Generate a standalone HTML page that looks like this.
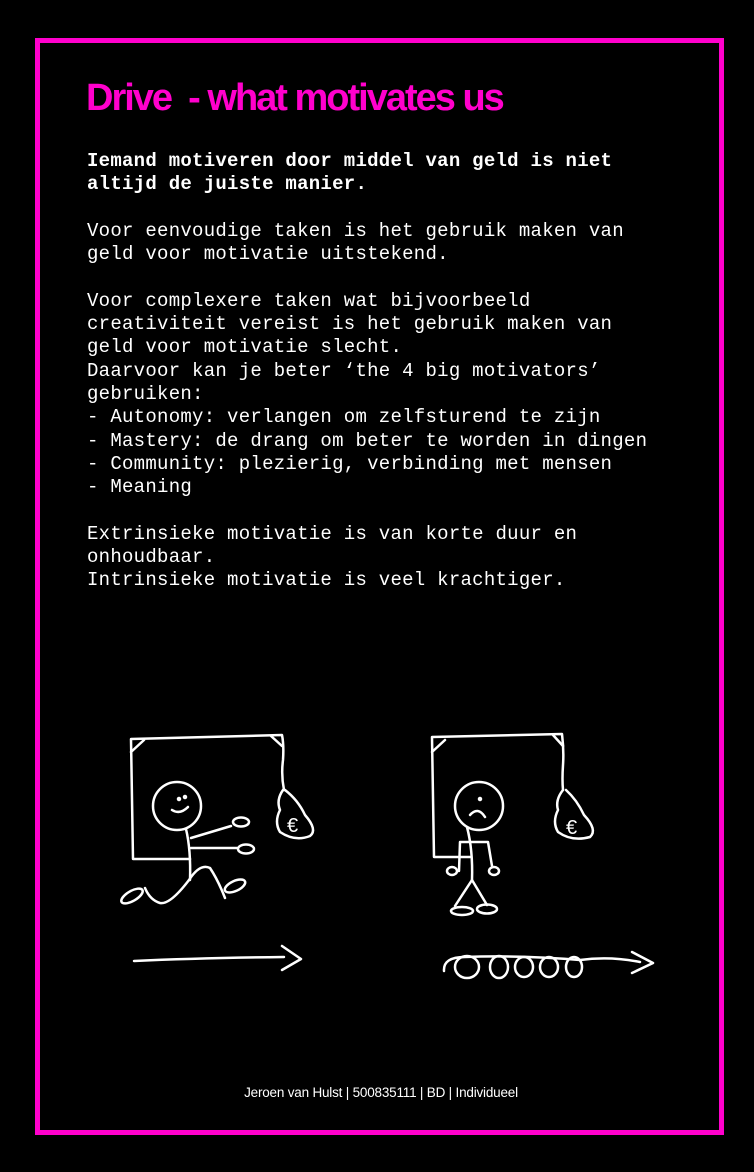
<!DOCTYPE html>
<html><head><meta charset="utf-8"><style>
html,body{margin:0;padding:0;background:#000;}
body{width:754px;height:1172px;position:relative;overflow:hidden;}
.frame{position:absolute;left:35px;top:38px;width:679px;height:1087px;border:5px solid #ff00cc;}
h1{position:absolute;left:86px;top:75px;margin:0;font:bold 38px/46px "Liberation Sans",sans-serif;letter-spacing:-2px;color:#ff00cc;white-space:pre;}
pre{position:absolute;left:87px;top:150px;margin:0;font:19px/23.3px "Liberation Mono",monospace;letter-spacing:0.27px;color:#fff;}
pre b{font-weight:bold;}
.foot{position:absolute;left:0;width:762px;top:1085px;text-align:center;font:13.5px/16px "Liberation Sans",sans-serif;letter-spacing:-0.2px;color:#fff;}
svg{position:absolute;left:0;top:0;}
</style></head><body>
<div class="frame"></div>
<h1>Drive  - what motivates us</h1>
<pre><b>Iemand motiveren door middel van geld is niet
altijd de juiste manier.</b>

Voor eenvoudige taken is het gebruik maken van
geld voor motivatie uitstekend.

Voor complexere taken wat bijvoorbeeld
creativiteit vereist is het gebruik maken van
geld voor motivatie slecht.
Daarvoor kan je beter ‘the 4 big motivators’
gebruiken:
- Autonomy: verlangen om zelfsturend te zijn
- Mastery: de drang om beter te worden in dingen
- Community: plezierig, verbinding met mensen
- Meaning

Extrinsieke motivatie is van korte duur en
onhoudbaar.
Intrinsieke motivatie is veel krachtiger.</pre>
<svg width="754" height="1172" fill="none" stroke="#fff" stroke-width="2.5" stroke-linecap="round" stroke-linejoin="round">
<path d="M190 859 L133 859 L131 739 L282 735 Q284 745 283 760 Q281 775 284 790"/>
<path d="M131 752 L144 740 M271 736 L282 746"/>
<path d="M283 790 Q276 800 280 810 Q274 822 280 832 Q295 842 310 836 Q318 830 305 815 Q298 800 285 790"/>
<text x="287" y="832" fill="#fff" stroke="none" font-family="Liberation Sans,sans-serif" font-size="20">€</text>
<circle cx="177" cy="806" r="24"/>
<path d="M172 810 Q180 815 188 807"/>
<circle cx="179" cy="799" r="1" fill="#fff"/><circle cx="185" cy="797" r="1" fill="#fff"/>
<path d="M186 829 Q191 850 190 880"/>
<path d="M191 838 L231 826 M191 848 L237 848"/>
<ellipse cx="241" cy="822" rx="8" ry="4.5"/>
<ellipse cx="246" cy="849" rx="8" ry="4.5"/>
<path d="M189 880 Q200 863 210 868 Q218 880 225 898"/>
<ellipse cx="235" cy="886" rx="11" ry="5" transform="rotate(-25 235 886)"/>
<path d="M189 880 Q170 905 160 903 Q150 900 145 888"/>
<ellipse cx="132" cy="896" rx="12" ry="5" transform="rotate(-30 132 896)"/>
<path d="M470 857 L434 857 L432 737 L562 734 Q564 750 563 765 Q562 780 563 790"/>
<path d="M432 752 L445 740 M553 735 L563 746"/>
<path d="M563 790 Q555 800 558 810 Q552 822 558 832 Q572 842 590 837 Q598 830 584 815 Q577 800 566 790"/>
<text x="566" y="834" fill="#fff" stroke="none" font-family="Liberation Sans,sans-serif" font-size="20">€</text>
<circle cx="479" cy="806" r="24"/>
<path d="M470 815 Q478 806 485 817"/>
<circle cx="480" cy="799" r="1" fill="#fff"/>
<path d="M467 827 Q473 850 472 880"/>
<path d="M459 871 L460 842 L488 842 L492 866"/>
<ellipse cx="452" cy="871" rx="5" ry="4"/>
<ellipse cx="494" cy="871" rx="5" ry="4"/>
<path d="M472 880 L455 906 M472 880 L487 905"/>
<ellipse cx="462" cy="911" rx="11" ry="4"/>
<ellipse cx="487" cy="909" rx="10" ry="4.5"/>
<path d="M134 961 Q200 958 284 957 M282 946 L301 959 L282 970"/>
<path d="M444 971 Q443 957 465 957 Q520 955 580 960 Q610 956 640 962 M632 952 L653 963 L632 973"/>
<ellipse cx="467" cy="967" rx="12" ry="11"/>
<ellipse cx="499" cy="967" rx="9" ry="11"/>
<ellipse cx="524" cy="967" rx="9" ry="10"/>
<ellipse cx="549" cy="967" rx="9" ry="10"/>
<ellipse cx="574" cy="967" rx="8" ry="10"/>
</svg>
<div class="foot">Jeroen van Hulst | 500835111 | BD | Individueel</div>
</body></html>
